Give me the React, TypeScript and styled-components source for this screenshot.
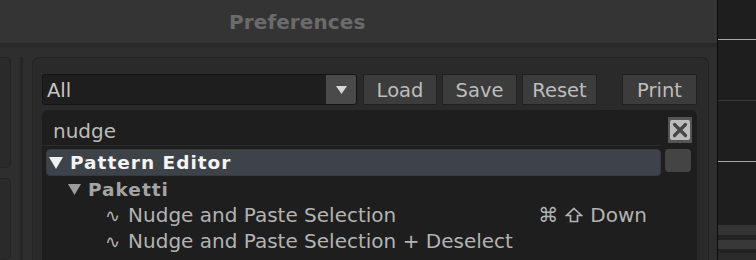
import React from "react";
import styled, { createGlobalStyle } from "styled-components";

const GlobalStyle = createGlobalStyle`
  html, body { margin: 0; padding: 0; background: #2e2e2e; overflow: hidden; }
  * { box-sizing: border-box; }
`;

const Window = styled.div`
  width: 756px;
  height: 260px;
  display: flex;
  overflow: hidden;
  font-family: "DejaVu Sans", "Liberation Sans", sans-serif;
`;

const MainColumn = styled.div`
  width: 717px;
  flex: none;
  display: flex;
  flex-direction: column;
  background: #2e2e2e;
`;

const TitleBar = styled.div`
  height: 43px;
  flex: none;
  background: #343434;
  display: flex;
  align-items: center;
  padding-left: 229px;
  padding-top: 1px;
  color: #6b6b6b;
  font-weight: bold;
  font-size: 20px;
  letter-spacing: 0.1px;
`;

const TitleRule = styled.div`
  height: 4px;
  flex: none;
  background: #292929;
`;

const Body = styled.div`
  flex: 1;
  display: flex;
  padding-top: 10px;
  min-height: 0;
`;

const StubColumn = styled.div`
  width: 11px;
  flex: none;
  display: flex;
  flex-direction: column;
  gap: 10px;
`;

const Stub = styled.div<{ $h?: number }>`
  height: ${(p) => (p.$h ? `${p.$h}px` : "auto")};
  flex: ${(p) => (p.$h ? "none" : "1")};
  background: #2a2a2a;
  border: 1px solid #242424;
  border-left: none;
  border-radius: 0 5px 5px 0;
`;

const Stripe = styled.div`
  width: 3px;
  flex: none;
  margin-left: 9px;
  margin-right: 9px;
  background: #262626;
`;

const Panel = styled.div`
  width: 677px;
  flex: none;
  background: #2a2a2a;
  border: 1px solid #232323;
  border-bottom: none;
  border-radius: 7px 7px 0 0;
  padding: 16px 11px 0 9px;
  display: flex;
  flex-direction: column;
  gap: 5px;
`;

const Toolbar = styled.div`
  display: flex;
  height: 31px;
`;

const Dropdown = styled.div`
  width: 315px;
  height: 31px;
  display: flex;
  background: #1e1e1e;
  border: 1px solid #141414;
  border-radius: 3px;
  overflow: hidden;
`;

const DropdownValue = styled.div`
  flex: 1;
  display: flex;
  align-items: center;
  padding-left: 4px;
  padding-top: 1px;
  color: #c6c6c6;
  font-size: 19.5px;
`;

const DropdownArrow = styled.div`
  width: 30px;
  background: #4a4a4a;
  display: flex;
  align-items: center;
  justify-content: center;
`;

const Button = styled.div<{ $w: number; $ml: number }>`
  width: ${(p) => p.$w}px;
  margin-left: ${(p) => p.$ml}px;
  height: 31px;
  background: #3c3c3c;
  border: 1px solid #202020;
  display: flex;
  align-items: center;
  justify-content: center;
  color: #bdbdbd;
  font-size: 19.5px;
  padding-top: 1px;
`;

const ListBox = styled.div`
  flex: 1;
  background: #1e1e1e;
  border-radius: 6px 6px 0 0;
  display: flex;
  min-height: 0;
`;

const ListMain = styled.div`
  width: 619px;
  flex: none;
  display: flex;
  flex-direction: column;
`;

const SearchRow = styled.div`
  height: 36px;
  flex: none;
  border-bottom: 1px solid #2b2b2b;
  display: flex;
  align-items: flex-end;
  padding: 0 0 2px 11px;
  color: #bcbcbc;
  font-size: 20px;
`;

const Tree = styled.div`
  padding: 3px 0 0 4px;
  display: flex;
  flex-direction: column;
`;

const Row = styled.div<{ $indent: number; $selected?: boolean; $bold?: boolean; $tone: string }>`
  height: ${(p) => (p.$selected ? 27 : 26)}px;
  flex: none;
  display: flex;
  align-items: center;
  padding-left: ${(p) => p.$indent}px;
  padding-right: 13px;
  color: ${(p) => p.$tone};
  font-weight: ${(p) => (p.$bold ? "bold" : "normal")};
  font-size: ${(p) => (p.$bold ? "18.5px" : "20px")};
  letter-spacing: ${(p) => (p.$bold ? "1px" : "0")};
  background: ${(p) => (p.$selected ? "#3e434a" : "transparent")};
  border: 1px solid ${(p) => (p.$selected ? "#363a40" : "transparent")};
  border-radius: 4px;
  white-space: nowrap;
`;

const Caret = styled.span<{ $gap: number }>`
  display: inline-flex;
  margin-right: ${(p) => p.$gap}px;
`;

const Wave = styled.span`
  margin-right: 8px;
  font-size: 18px;
`;

const Label = styled.span`
  flex: 1;
`;

const Shortcut = styled.span`
  display: flex;
  align-items: center;
  gap: 7px;
`;

const SideColumn = styled.div`
  flex: none;
  width: 36px;
  display: flex;
  flex-direction: column;
  padding-top: 7px;
`;

const CloseBox = styled.div`
  width: 24px;
  height: 26px;
  margin-left: 7px;
  background: #555;
  display: flex;
  align-items: center;
  justify-content: center;
`;

const CloseInner = styled.div`
  width: 20px;
  height: 20px;
  background: #bdbdbd;
  border-radius: 2px;
  display: flex;
  align-items: center;
  justify-content: center;
`;

const Thumb = styled.div`
  width: 26px;
  height: 23px;
  margin-top: 6px;
  margin-left: 4px;
  background: #444;
  border-radius: 4px;
`;

const EdgeStrip = styled.div`
  flex: 1;
`;

const BlackLine = styled.div`
  width: 1px;
  flex: none;
  background: #0c0c0c;
`;

const RightPane = styled.div`
  flex: 1;
  display: flex;
  flex-direction: column;
  background: #1e1e1e;
`;

const Band = styled.div<{ $h: number; $c: string }>`
  height: ${(p) => p.$h}px;
  flex: none;
  background: ${(p) => p.$c};
`;

const Tri = ({ w, h, color }: { w: number; h: number; color: string }) => (
  <svg width={w} height={h} viewBox={`0 0 ${w} ${h}`}>
    <polygon points={`0,0 ${w},0 ${w / 2},${h}`} fill={color} />
  </svg>
);

const ShiftIcon = () => (
  <svg width="18" height="16" viewBox="0 0 18 16">
    <path
      d="M9 1.5 L16.5 8.5 L12.5 8.5 L12.5 14.5 L5.5 14.5 L5.5 8.5 L1.5 8.5 Z"
      fill="none"
      stroke="#b3b3b3"
      strokeWidth="1.7"
      strokeLinejoin="miter"
    />
  </svg>
);

const bands: [number, string][] = [
  [39, "#1e1e1e"],
  [1, "#a8a8a8"],
  [60, "#1e1e1e"],
  [1, "#383838"],
  [60, "#1e1e1e"],
  [1, "#a8a8a8"],
  [63, "#1e1e1e"],
  [10, "#343434"],
  [5, "#232323"],
  [9, "#383838"],
  [4, "#232323"],
  [7, "#2b2b2b"],
];

export default function App() {
  return (
    <>
      <GlobalStyle />
      <Window>
        <MainColumn>
          <TitleBar>Preferences</TitleBar>
          <TitleRule />
          <Body>
            <StubColumn>
              <Stub $h={111} />
              <Stub />
            </StubColumn>
            <Stripe />
            <Panel>
              <Toolbar>
                <Dropdown>
                  <DropdownValue>All</DropdownValue>
                  <DropdownArrow>
                    <Tri w={11} h={8} color="#d8d8d8" />
                  </DropdownArrow>
                </Dropdown>
                <Button $w={74} $ml={6}>Load</Button>
                <Button $w={75} $ml={5}>Save</Button>
                <Button $w={75} $ml={5}>Reset</Button>
                <Button $w={75} $ml={25}>Print</Button>
              </Toolbar>
              <ListBox>
                <ListMain>
                  <SearchRow>nudge</SearchRow>
                  <Tree>
                    <Row $indent={2} $selected $bold $tone="#f4f4f4">
                      <Caret $gap={7}>
                        <Tri w={14} h={12} color="#f0f0f0" />
                      </Caret>
                      <Label>Pattern Editor</Label>
                    </Row>
                    <Row $indent={21} $bold $tone="#a4a4a4">
                      <Caret $gap={7}>
                        <Tri w={13} h={11} color="#9c9c9c" />
                      </Caret>
                      <Label>Paketti</Label>
                    </Row>
                    <Row $indent={58} $tone="#b3b3b3">
                      <Wave>∿</Wave>
                      <Label>Nudge and Paste Selection</Label>
                      <Shortcut>
                        <span>⌘</span>
                        <ShiftIcon />
                        <span>Down</span>
                      </Shortcut>
                    </Row>
                    <Row $indent={58} $tone="#b3b3b3">
                      <Wave>∿</Wave>
                      <Label>Nudge and Paste Selection + Deselect</Label>
                    </Row>
                    <Row $indent={2} $bold $tone="#b0b0b0">
                      <Caret $gap={7}>
                        <Tri w={14} h={12} color="#b0b0b0" />
                      </Caret>
                      <Label>Sample Editor</Label>
                    </Row>
                  </Tree>
                </ListMain>
                <SideColumn>
                  <CloseBox>
                    <CloseInner>
                      <svg width="16" height="16" viewBox="0 0 16 16">
                        <path d="M2.5 2.5 L13.5 13.5 M13.5 2.5 L2.5 13.5" stroke="#454545" strokeWidth="3.2" strokeLinecap="round" />
                      </svg>
                    </CloseInner>
                  </CloseBox>
                  <Thumb />
                  <EdgeStrip />
                </SideColumn>
              </ListBox>
            </Panel>
          </Body>
        </MainColumn>
        <BlackLine />
        <RightPane>
          {bands.map(([h, c], i) => (
            <Band key={i} $h={h} $c={c} />
          ))}
        </RightPane>
      </Window>
    </>
  );
}
